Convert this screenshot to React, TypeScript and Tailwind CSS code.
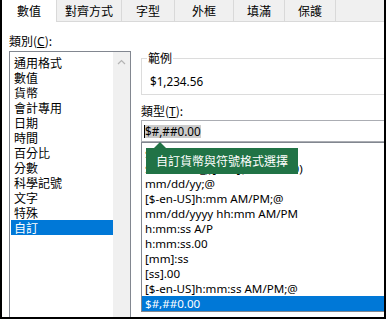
import React from 'react'

const cjk = { fontFamily: '"Noto Sans CJK TC", "Noto Sans", sans-serif' }
const latin = { fontFamily: '"Noto Sans", "Noto Sans CJK TC", sans-serif' }

const tabs = [
  { label: '數值', w: 'w-[55px]' },
  { label: '對齊方式', w: 'w-[65px]' },
  { label: '字型', w: 'w-[53px]' },
  { label: '外框', w: 'w-[59px]' },
  { label: '填滿', w: 'w-[51px]' },
  { label: '保護', w: 'w-[51px]' },
]

const categories = ['通用格式', '數值', '貨幣', '會計專用', '日期', '時間', '百分比', '分數', '科學記號', '文字', '特殊', '自訂']

const types = [
  '$#,##0.00_);($#,##0.00)',
  '$#,##0.00_);[Red]($#,##0.00)',
  'mm/dd/yy;@',
  '[$-en-US]h:mm AM/PM;@',
  'mm/dd/yyyy hh:mm AM/PM',
  'h:mm:ss A/P',
  'h:mm:ss.00',
  '[mm]:ss',
  '[ss].00',
  '[$-en-US]h:mm:ss AM/PM;@',
  '$#,##0.00',
]

export default function App() {
  return (
    <div className="w-[386px] h-[319px] bg-white border-l-2 border-r-2 border-b-2 border-black overflow-hidden text-[12px] text-black">
      {/* tabs */}
      <div className="flex h-[22px] bg-[#f0f0f0]" style={cjk}>
        {tabs.map((t, i) => (
          <div
            key={t.label}
            className={
              i === 0
                ? `${t.w} h-[22px] bg-white border-r border-[#d9d9d9] flex items-center justify-center`
                : `${t.w} h-[22px] border-r border-b border-[#d9d9d9] flex items-center justify-center`
            }
          >
            {t.label}
          </div>
        ))}
        <div className="flex-1 border-b border-[#d9d9d9]" />
      </div>

      {/* body */}
      <div className="flex pl-[7px]">
        {/* category */}
        <div className="w-[122px] shrink-0 pt-[11px]">
          <div className="h-[15px] leading-[15px]" style={cjk}>
            類別(<span className="underline" style={latin}>C</span>):
          </div>
          <div className="mt-[3px] h-[280px] border border-[#828790] flex">
            <div className="flex-1 pt-[3px] pl-[1px]" style={cjk}>
              {categories.map((c) => (
                <div
                  key={c}
                  className={
                    c === '自訂'
                      ? 'h-[15px] leading-[15px] pl-[3px] bg-[#0078d7] text-white'
                      : 'h-[15px] leading-[15px] pl-[3px]'
                  }
                >
                  {c}
                </div>
              ))}
            </div>
            <div className="w-[17px] bg-[#f0f0f0] flex justify-center pt-[7px]">
              <svg width="9" height="6" viewBox="0 0 9 6">
                <path d="M1 5 L4.5 1.5 L8 5" fill="none" stroke="#b4b4b4" strokeWidth="1.2" />
              </svg>
            </div>
          </div>
        </div>

        {/* right side */}
        <div className="w-[260px] shrink-0 ml-[10px] pt-[29px] relative">
          <fieldset className="border border-[#dcdcdc] h-[44px]">
            <legend className="ml-[5px] px-[1px] h-[14px] leading-[14px]" style={cjk}>範例</legend>
            <div className="pl-[8px] pt-[8px] leading-[16px] text-[11.7px]" style={latin}>$1,234.56</div>
          </fieldset>

          <div className="mt-[8px] h-[15px] leading-[15px]" style={cjk}>
            類型(<span className="underline" style={latin}>T</span>):
          </div>

          <div className="mt-[2px] h-[22px] border border-[#abadb3] flex items-center pl-[2px] text-[11.7px]" style={latin}>
            <span className="w-px h-[13px] bg-black" />
            <span className="bg-[#cccccc] leading-[13px] h-[13px]">$#,##0.00</span>
          </div>

          <div className="h-[170px] border border-[#828790] pt-[3px] text-[11.6px]" style={latin}>
            {types.map((t, i) => (
              <div
                key={t}
                className={
                  i === types.length - 1
                    ? 'h-[15px] leading-[15px] pl-[3px] bg-[#0078d7] text-white whitespace-nowrap'
                    : 'h-[15px] leading-[15px] pl-[3px] whitespace-nowrap'
                }
              >
                {t}
              </div>
            ))}
          </div>

          {/* tooltip */}
          <div className="absolute left-[5px] top-[120px]">
            <svg width="12" height="6" viewBox="0 0 12 6" className="ml-[8px] block">
              <path d="M0 6 L6 0 L12 6 Z" fill="#217346" />
            </svg>
            <div className="w-[152px] h-[26px] bg-[#217346] text-white flex items-center justify-center" style={cjk}>
              自訂貨幣與符號格式選擇
            </div>
          </div>
        </div>
      </div>
    </div>
  )
}
